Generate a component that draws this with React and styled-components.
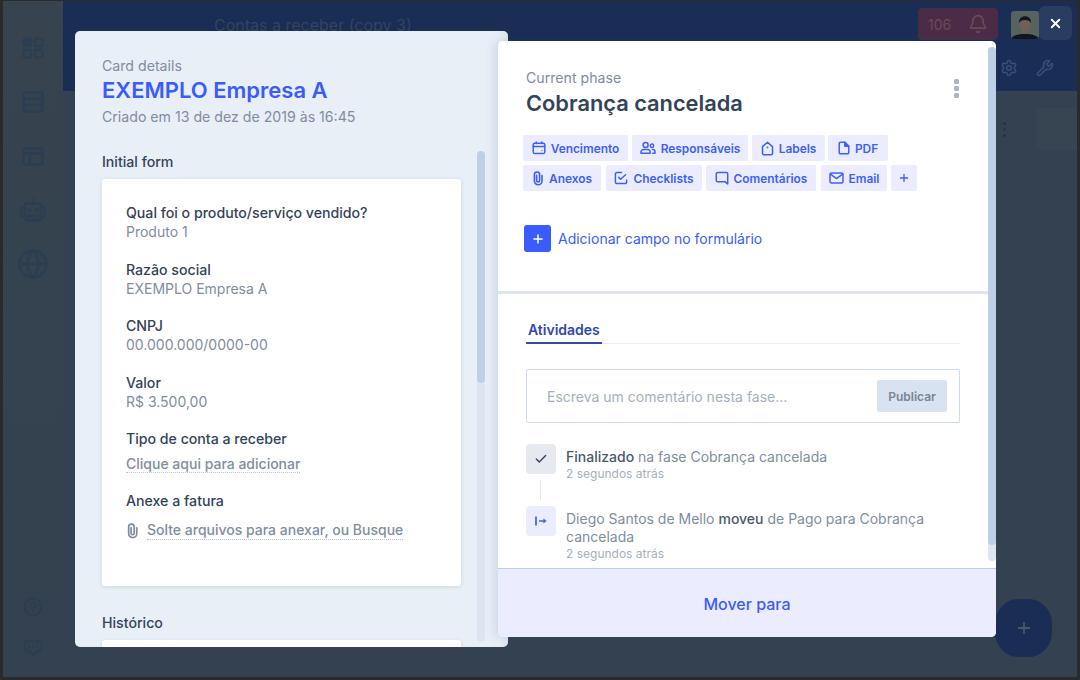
import React from 'react';
import styled, { createGlobalStyle } from 'styled-components';
import { Bell, Check, Globe, HelpCircle, Plus, Settings, Wrench, X } from 'lucide-react';

const GlobalStyle = createGlobalStyle`
    html, body { margin: 0; padding: 0; }
    body { font-family: Inter, "Liberation Sans", sans-serif; background: #2a2a2a; }
    * { box-sizing: border-box; }
`;

const Page = styled.div`
    position: relative;
    width: 1080px;
    height: 680px;
    overflow: hidden;
    padding: 1px 3px 3px 3px;
    background: #2a2a2a;
`;

const AppFrame = styled.div`
    display: flex;
    height: 100%;
    background: #334150;
`;

const Sidebar = styled.aside`
    width: 60px;
    display: flex;
    flex-direction: column;
    align-items: center;
    padding: 20px 0 14px;
    background: linear-gradient(#37444f, #334150);
    color: #2b3e52;
`;

const SideIcon = styled.div`
    height: 54px;
    display: flex;
    align-items: center;
    justify-content: center;
`;

const SideBottom = styled.div`
    margin-top: auto;
    display: flex;
    flex-direction: column;
    align-items: center;
    gap: 22px;
    padding-bottom: 6px;
`;

const Main = styled.div`
    flex: 1;
    display: flex;
    flex-direction: column;
`;

const Header = styled.header`
    height: 90px;
    background: #192d55;
    display: flex;
    flex-direction: column;
`;

const HeaderTop = styled.div`
    height: 48px;
    display: flex;
    align-items: flex-start;
    padding: 7px 0 0 151px;
`;

const HeaderTitle = styled.div`
    font-size: 16px;
    line-height: 34px;
    color: #34435f;
    flex: 1;
`;

const Alert = styled.div`
    width: 80px;
    height: 32px;
    border-radius: 4px;
    background: #4a2c46;
    color: #6b4a5a;
    display: flex;
    align-items: center;
    gap: 17px;
    padding-left: 10px;
    font-size: 14px;
`;

const Avatar = styled.svg`
    width: 28px;
    height: 28px;
    margin: 3px 38px 0 13px;
    border-radius: 3px;
    display: block;
`;

const HeaderTools = styled.div`
    display: flex;
    justify-content: flex-end;
    gap: 18px;
    padding: 10px 23px 0 0;
    color: #3a4f78;
`;

const Content = styled.div`
    flex: 1;
    display: flex;
    justify-content: flex-end;
    align-items: flex-start;
    padding: 30px 0 0;
`;

const DimDots = styled.div`
    width: 33px;
    display: flex;
    flex-direction: column;
    gap: 2px;
    & > i { width: 3px; height: 3px; border-radius: 50%; background: #263545; margin-top: 1px; }
`;

const DimTint = styled.div`
    width: 41px;
    height: 42px;
    margin-top: -13px;
    background: #374451;
`;

const Fab = styled.div`
    position: absolute;
    left: 995px;
    top: 599px;
    width: 57px;
    height: 58px;
    border-radius: 42%;
    background: #192d55;
    color: #4a5a6b;
    display: flex;
    align-items: center;
    justify-content: center;
`;

const CloseButton = styled.button`
    position: absolute;
    left: 1039px;
    top: 6px;
    width: 33px;
    height: 34px;
    border: none;
    border-radius: 6px;
    background: #2a3c60;
    color: #fff;
    display: flex;
    align-items: center;
    justify-content: center;
    padding: 0;
`;

const Overlay = styled.div`
    position: absolute;
    left: 75px;
    top: 31px;
    display: flex;
    align-items: flex-start;
`;

const DetailsPanel = styled.section`
    position: relative;
    width: 433px;
    height: 616px;
    overflow: hidden;
    border-radius: 5px;
    background: #e9eff7;
    padding: 26px 0 0 27px;
    box-shadow: inset -10px 0 10px -8px #d5dfec;
`;

const Eyebrow = styled.div`
    font-size: 14.15px;
    line-height: 17px;
    color: #7f8da0;
`;

const CardTitle = styled.h1`
    margin: 3px 0 4px;
    font-size: 22px;
    line-height: 27px;
    font-weight: 600;
    color: #3a5cff;
`;

const CreatedAt = styled.div`
    font-size: 14.15px;
    line-height: 17px;
    color: #7f8da0;
`;

const SectionTitle = styled.h2`
    margin: ${(p) => p.$top}px 0 9px;
    font-size: 14.15px;
    line-height: 17px;
    font-weight: 500;
    color: #33435a;
`;

const FormCard = styled.div`
    width: 359px;
    height: ${(p) => p.$height}px;
    background: #fff;
    border-radius: 3px;
    padding: 25px 24px 0;
    box-shadow: 0 1px 4px rgba(80, 110, 160, 0.18);
`;

const Field = styled.div`
    margin-bottom: ${(p) => p.$gap || 19.5}px;
`;

const FieldLabel = styled.div`
    font-size: 14.15px;
    line-height: 17px;
    font-weight: 500;
    color: #33435a;
    margin-bottom: ${(p) => p.$gap || 2}px;
`;

const FieldValue = styled.div`
    font-size: 14px;
    line-height: 18px;
    color: #7f8da0;
`;

const FieldLink = styled.span`
    font-size: 14px;
    line-height: 18px;
    font-weight: 500;
    color: #7f8da3;
    border-bottom: 1px dotted #b9c6da;
`;

const AttachRow = styled.div`
    display: flex;
    align-items: center;
    gap: 8px;
    color: #7f8da3;
`;

const Track = styled.div`
    position: absolute;
    left: 402px;
    top: 120px;
    bottom: 5px;
    width: 8px;
    border-radius: 4px;
    background: #dce5f1;
`;

const Thumb = styled.div`
    height: 232px;
    border-radius: 4px;
    background: #bfcfe5;
`;

const PhasePanel = styled.section`
    position: relative;
    width: 498px;
    height: 596px;
    margin: 10px 0 0 -10px;
    background: #fff;
    border-radius: 5px;
    overflow: hidden;
    display: flex;
    flex-direction: column;
    box-shadow: -4px 0 10px rgba(80, 110, 160, 0.16);
`;

const PhaseTrack = styled.div`
    position: absolute;
    right: 0;
    top: 6px;
    bottom: 76px;
    width: 8px;
    border-radius: 4px;
    background: #dce5f1;
`;

const PhaseThumb = styled.div`
    height: 498px;
    border-radius: 4px;
    background: #bfcfe5;
`;

const PhaseTop = styled.div`
    height: 253px;
    flex: none;
    padding: 28px 28px 0;
    border-bottom: 3px solid #dde6f3;
    position: relative;
`;

const PhaseTitle = styled.h2`
    margin: 4px 0 18px;
    font-size: 21.8px;
    line-height: 27px;
    font-weight: 600;
    color: #33435a;
`;

const MenuDots = styled.div`
    position: absolute;
    left: 456px;
    top: 38px;
    display: flex;
    flex-direction: column;
    gap: 2px;
    & > i { width: 5px; height: 5px; border-radius: 1.5px; background: #a9b4c4; }
`;

const ChipRow = styled.div`
    display: flex;
    margin: 0 0 4px -3px;
`;

const Chip = styled.button`
    flex: none;
    width: ${(p) => p.$width}px;
    margin-right: ${(p) => p.$gap}px;
    height: 26px;
    border: none;
    border-radius: 2px;
    background: #ebedfe;
    color: #3e5ffb;
    display: flex;
    align-items: center;
    justify-content: center;
    gap: 5px;
    padding: 0;
    font-family: inherit;
    font-size: 11.9px;
    font-weight: 600;
    white-space: nowrap;
`;

const AddField = styled.div`
    display: flex;
    align-items: center;
    gap: 7px;
    margin: 34px 0 0 -2px;
    font-size: 14px;
    color: #3a5cff;
`;

const AddSquare = styled.div`
    width: 27px;
    height: 27px;
    border-radius: 3px;
    background: #3a5cff;
    color: #fff;
    display: flex;
    align-items: center;
    justify-content: center;
`;

const PhaseBody = styled.div`
    flex: 1;
    padding: 27px 28px 0;
    overflow: hidden;
`;

const TabBar = styled.div`
    width: 434px;
    border-bottom: 1px solid #e9eef6;
    display: flex;
`;

const Tab = styled.div`
    font-size: 14px;
    line-height: 17px;
    font-weight: 600;
    color: #2f49b0;
    padding: 0 2px 4px 2px;
    margin-bottom: -1px;
    border-bottom: 2px solid #2f49b0;
`;

const Composer = styled.div`
    width: 434px;
    height: 54px;
    margin: 25px 0 21px;
    border: 1px solid #cfdbee;
    border-radius: 2px;
    display: flex;
    align-items: center;
    justify-content: space-between;
    padding: 0 12px 0 20px;
    font-size: 14px;
    color: #a4afbf;
`;

const PublishButton = styled.button`
    width: 70px;
    height: 32px;
    border: none;
    border-radius: 2px;
    background: #d8e2f0;
    color: #7a8596;
    font-family: inherit;
    font-size: 12px;
    font-weight: 600;
`;

const ActivityRow = styled.div`
    display: flex;
    gap: 10px;
    width: 434px;
`;

const ActivityIcon = styled.div`
    flex: none;
    width: 30px;
    height: 30px;
    border-radius: 4px;
    display: flex;
    align-items: center;
    justify-content: center;
    background: ${(p) => (p.$blue ? '#ebedfe' : '#e6eaf0')};
    color: ${(p) => (p.$blue ? '#3e5ffb' : '#33435a')};
`;

const Connector = styled.div`
    width: 1px;
    height: 20px;
    margin: -1px 0 6px 14px;
    background: #e1e8f3;
`;

const ActivityText = styled.div`
    font-size: 14px;
    line-height: 18px;
    color: #7f8da0;
    margin-top: 4px;
    & > b { font-weight: 500; color: #4a586b; }
`;

const ActivityTime = styled.div`
    font-size: 12px;
    line-height: 15px;
    color: #a4afbf;
`;

const MoveBar = styled.button`
    height: 69px;
    flex: none;
    border: none;
    border-top: 1px solid #bccdf3;
    background: #ebedfe;
    color: #3a5cff;
    font-family: inherit;
    font-size: 16px;
    font-weight: 500;
    padding: 2px 0 0;
`;

const ChipSvg = ({ w = 14, h = 14, children }) => (
    <svg width={w} height={h} viewBox={`0 0 ${w} ${h}`} fill="none" stroke="currentColor" strokeWidth="1.5" strokeLinejoin="round" strokeLinecap="round">
        {children}
    </svg>
);

const CalendarIcon = () => (
    <ChipSvg>
        <rect x="1.2" y="2.2" width="11.6" height="10.3" rx="1.6" />
        <path d="M1.2 5.6h11.6M4.2 1v1.5M9.8 1v1.5" />
        <circle cx="10" cy="9.6" r="0.7" fill="currentColor" stroke="none" />
    </ChipSvg>
);

const UsersIcon = () => (
    <ChipSvg w={16} h={14}>
        <circle cx="5.6" cy="4" r="2.5" />
        <path d="M1 12.2V11a2.4 2.4 0 0 1 2.4-2.4h4.4A2.4 2.4 0 0 1 10.2 11v1.2z" />
        <circle cx="12" cy="4.8" r="1.7" />
        <path d="M12.4 8.6h.6a2 2 0 0 1 2 2v1.6h-2.2" />
    </ChipSvg>
);

const TagIcon = () => (
    <ChipSvg w={13} h={15}>
        <path d="M1.5 5.6 6.5 1.2l5 4.4v7a1.2 1.2 0 0 1-1.2 1.2H2.7a1.2 1.2 0 0 1-1.2-1.2z" />
        <circle cx="6.5" cy="6.4" r="0.9" fill="currentColor" stroke="none" />
    </ChipSvg>
);

const FileIcon = () => (
    <ChipSvg w={12} h={14}>
        <path d="M2.4 1.2h4.4l4 4v6.4a1.2 1.2 0 0 1-1.2 1.2H2.4a1.2 1.2 0 0 1-1.2-1.2V2.4a1.2 1.2 0 0 1 1.2-1.2z" />
        <path d="M6.8 1.2v4h4z" fill="currentColor" />
    </ChipSvg>
);

const ClipIcon = ({ w = 12, h = 15 }) => (
    <svg width={w} height={h} viewBox="0 0 12 15" fill="none" stroke="currentColor" strokeWidth="1.6" strokeLinecap="round">
        <path d="M4.6 4.4v5.1a1.5 1.5 0 0 0 3 0V3.6a2.6 2.6 0 0 0-5.2 0v6.3a3.8 3.8 0 0 0 7.6 0V4.6" />
    </svg>
);

const ChecklistIcon = () => (
    <ChipSvg>
        <path d="M7.5 1.6H2.8a1.4 1.4 0 0 0-1.4 1.4v8.2A1.4 1.4 0 0 0 2.8 12.6h8.4a1.4 1.4 0 0 0 1.4-1.4V9" />
        <path d="m4.6 6.2 2 2 5-4.4" />
    </ChipSvg>
);

const CommentIcon = () => (
    <ChipSvg>
        <path d="M2.6 1.4h8.8a1.3 1.3 0 0 1 1.3 1.3v10.2l-2.8-2.2H2.6a1.3 1.3 0 0 1-1.3-1.3V2.7a1.3 1.3 0 0 1 1.3-1.3z" />
    </ChipSvg>
);

const MailIcon = () => (
    <ChipSvg w={15} h={14}>
        <rect x="1" y="2" width="13" height="10" rx="1.5" />
        <path d="m1.4 3.2 6.1 4.4 6.1-4.4" />
    </ChipSvg>
);

const MovedIcon = () => (
    <svg width="14" height="14" viewBox="0 0 14 14" fill="none" stroke="currentColor" strokeWidth="1.7">
        <path d="M2 2.5v9M5 7h6" />
        <path d="M9.4 4.4 12.6 7 9.4 9.6z" fill="currentColor" stroke="none" />
    </svg>
);

const DashboardIcon = () => (
    <svg width="22" height="22" viewBox="0 0 22 22" fill="none" stroke="currentColor" strokeWidth="2.4">
        <rect x="1.5" y="1.5" width="7.5" height="7.5" rx="2" fill="currentColor" />
        <rect x="13" y="1.5" width="7.5" height="7.5" rx="2" />
        <rect x="1.5" y="13" width="7.5" height="7.5" rx="2" />
        <rect x="13" y="13" width="7.5" height="7.5" rx="2" />
    </svg>
);

const TableIcon = () => (
    <svg width="22" height="22" viewBox="0 0 22 22" fill="none" stroke="currentColor" strokeWidth="2.4">
        <rect x="1.5" y="1.5" width="19" height="19" rx="2" />
        <path d="M1.5 8h19M1.5 14h19" />
    </svg>
);

const PanelIcon = () => (
    <svg width="22" height="19" viewBox="0 0 22 19" fill="none" stroke="currentColor" strokeWidth="2.4">
        <rect x="1.5" y="1.5" width="19" height="16" rx="1.5" />
        <path d="M1.5 6.5h19M8 6.5v11" />
    </svg>
);

const RobotIcon = () => (
    <svg width="28" height="27" viewBox="0 0 28 27" fill="none" stroke="currentColor" strokeWidth="2.4">
        <path d="M14 1.5v5" />
        <rect x="6" y="6.5" width="16" height="17" rx="2.5" />
        <path d="M6 10.5H4a2 2 0 0 0-2 2v5a2 2 0 0 0 2 2h2M22 10.5h2a2 2 0 0 1 2 2v5a2 2 0 0 1-2 2h-2" />
        <circle cx="10.5" cy="13" r="1.6" fill="currentColor" stroke="none" />
        <circle cx="17.5" cy="13" r="1.6" fill="currentColor" stroke="none" />
        <path d="M9.5 23.5v-4.5h9v4.5" />
    </svg>
);

const ChatIcon = () => (
    <svg width="20" height="18" viewBox="0 0 20 18" fill="none" stroke="currentColor" strokeWidth="2">
        <path d="M10 1.2c4.8 0 8.8 2.4 8.8 6s-4 6-6.5 6L10 16.4l-2.300-3.200C5.200 13.200 1.200 10.800 1.200 7.200s4-6 8.800-6z" strokeLinejoin="round" />
        <circle cx="6" cy="7.300" r="1.100" fill="currentColor" stroke="none" />
        <circle cx="10" cy="7.300" r="1.100" fill="currentColor" stroke="none" />
        <circle cx="14" cy="7.300" r="1.100" fill="currentColor" stroke="none" />
    </svg>
);

const chipsTop = [
    { label: 'Vencimento', Icon: CalendarIcon, width: 105, gap: 4 },
    { label: 'Responsáveis', Icon: UsersIcon, width: 116, gap: 4 },
    { label: 'Labels', Icon: TagIcon, width: 73, gap: 3 },
    { label: 'PDF', Icon: FileIcon, width: 60, gap: 0 },
];

const chipsBottom = [
    { label: 'Anexos', Icon: ClipIcon, width: 78, gap: 5 },
    { label: 'Checklists', Icon: ChecklistIcon, width: 96, gap: 4 },
    { label: 'Comentários', Icon: CommentIcon, width: 110, gap: 5 },
    { label: 'Email', Icon: MailIcon, width: 66, gap: 4 },
];

const App = () => {
    return (
        <Page>
            <GlobalStyle />
            <AppFrame>
                <Sidebar>
                    <SideIcon><DashboardIcon /></SideIcon>
                    <SideIcon><TableIcon /></SideIcon>
                    <SideIcon><PanelIcon /></SideIcon>
                    <SideIcon><RobotIcon /></SideIcon>
                    <SideIcon><Globe size={32} strokeWidth={2} /></SideIcon>
                    <SideBottom>
                        <HelpCircle size={20} strokeWidth={2.2} />
                        <ChatIcon />
                    </SideBottom>
                </Sidebar>
                <Main>
                    <Header>
                        <HeaderTop>
                            <HeaderTitle>Contas a receber (copy 3)</HeaderTitle>
                            <Alert>106<Bell size={20} /></Alert>
                            <Avatar viewBox="0 0 28 28">
                                <rect width="28" height="28" fill="#56635f" />
                                <path d="M0 28c2-4 8-5 14-5s12 1 14 5z" fill="#12161c" />
                                <ellipse cx="14" cy="14" rx="5.500" ry="8" fill="#6f6058" />
                                <path d="M8 12C7 3 21 3 20 12 18.500 8 9.500 8 8 12z" fill="#14181c" />
                            </Avatar>
                        </HeaderTop>
                        <HeaderTools>
                            <Settings size={18} />
                            <Wrench size={18} />
                        </HeaderTools>
                    </Header>
                    <Content>
                        <DimDots><i /><i /><i /></DimDots>
                        <DimTint />
                    </Content>
                </Main>
            </AppFrame>
            <Fab><Plus size={18} strokeWidth={2.4} /></Fab>
            <CloseButton><X size={15} strokeWidth={3} /></CloseButton>
            <Overlay>
                <DetailsPanel>
                    <Eyebrow>Card details</Eyebrow>
                    <CardTitle>EXEMPLO Empresa A</CardTitle>
                    <CreatedAt>Criado em 13 de dez de 2019 às 16:45</CreatedAt>
                    <SectionTitle $top={28}>Initial form</SectionTitle>
                    <FormCard $height={407}>
                        <Field>
                            <FieldLabel>Qual foi o produto/serviço vendido?</FieldLabel>
                            <FieldValue>Produto 1</FieldValue>
                        </Field>
                        <Field>
                            <FieldLabel>Razão social</FieldLabel>
                            <FieldValue>EXEMPLO Empresa A</FieldValue>
                        </Field>
                        <Field>
                            <FieldLabel>CNPJ</FieldLabel>
                            <FieldValue>00.000.000/0000-00</FieldValue>
                        </Field>
                        <Field>
                            <FieldLabel>Valor</FieldLabel>
                            <FieldValue>R$ 3.500,00</FieldValue>
                        </Field>
                        <Field $gap={19}>
                            <FieldLabel $gap={6}>Tipo de conta a receber</FieldLabel>
                            <FieldLink>Clique aqui para adicionar</FieldLink>
                        </Field>
                        <Field>
                            <FieldLabel $gap={12}>Anexe a fatura</FieldLabel>
                            <AttachRow>
                                <ClipIcon w={13} h={16} />
                                <FieldLink>Solte arquivos para anexar, ou Busque</FieldLink>
                            </AttachRow>
                        </Field>
                    </FormCard>
                    <SectionTitle $top={28}>Histórico</SectionTitle>
                    <FormCard $height={40} />
                    <Track><Thumb /></Track>
                </DetailsPanel>
                <PhasePanel>
                    <PhaseTop>
                        <Eyebrow>Current phase</Eyebrow>
                        <PhaseTitle>Cobrança cancelada</PhaseTitle>
                        <MenuDots><i /><i /><i /></MenuDots>
                        <ChipRow>
                            {chipsTop.map(({ label, Icon, width, gap }) => (
                                <Chip key={label} $width={width} $gap={gap}><Icon />{label}</Chip>
                            ))}
                        </ChipRow>
                        <ChipRow>
                            {chipsBottom.map(({ label, Icon, width, gap }) => (
                                <Chip key={label} $width={width} $gap={gap}><Icon />{label}</Chip>
                            ))}
                            <Chip $width={26} $gap={0}><Plus size={12} strokeWidth={2.6} /></Chip>
                        </ChipRow>
                        <AddField>
                            <AddSquare><Plus size={14} strokeWidth={2.6} /></AddSquare>
                            Adicionar campo no formulário
                        </AddField>
                    </PhaseTop>
                    <PhaseBody>
                        <TabBar><Tab>Atividades</Tab></TabBar>
                        <Composer>
                            Escreva um comentário nesta fase...
                            <PublishButton>Publicar</PublishButton>
                        </Composer>
                        <ActivityRow>
                            <ActivityIcon><Check size={14} strokeWidth={2.4} /></ActivityIcon>
                            <ActivityText>
                                <b>Finalizado</b> na fase Cobrança cancelada
                                <ActivityTime>2 segundos atrás</ActivityTime>
                            </ActivityText>
                        </ActivityRow>
                        <Connector />
                        <ActivityRow>
                            <ActivityIcon $blue><MovedIcon /></ActivityIcon>
                            <ActivityText>
                                Diego Santos de Mello <b>moveu</b> de Pago para Cobrança cancelada
                                <ActivityTime>2 segundos atrás</ActivityTime>
                            </ActivityText>
                        </ActivityRow>
                    </PhaseBody>
                    <MoveBar>Mover para</MoveBar>
                    <PhaseTrack><PhaseThumb /></PhaseTrack>
                </PhasePanel>
            </Overlay>
        </Page>
    );
};

export default App;
